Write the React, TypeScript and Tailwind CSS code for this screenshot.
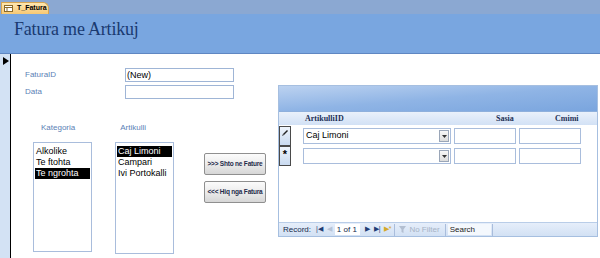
import React from "react";

const sans = { fontFamily: '"Liberation Sans", Arial, sans-serif' };

const ListBox = ({ items, selected, h }: { items: string[]; selected: number; h: string }) => {
  return (
    <div className={`w-[59px] ${h} border border-[#a9bddc] bg-white pt-[3px] px-[1px]`}>
      {items.map((it, i) => (
        <div
          key={it}
          className={`h-[11px] leading-[11px] text-[9px] pl-[1px] ${i === selected ? "bg-black text-white" : "text-black"}`}
        >
          {it}
        </div>
      ))}
    </div>
  );
};

const FormButton = ({ label }: { label: string }) => {
  return (
    <button className="w-[62px] h-[22px] border border-[#8f8f8f] rounded-[2px] bg-gradient-to-b from-[#fbfbfb] via-[#ececec] to-[#d6d6d6] text-[6.5px] font-bold text-[#1f2b4a] tracking-[-0.2px] whitespace-nowrap">
      {label}
    </button>
  );
};

const RecordSel = ({ children }: { children?: React.ReactNode }) => {
  return (
    <div className="w-[12px] h-[20px] border border-[#4a4a4a] bg-gradient-to-b from-[#eef4fb] to-[#c9daf0] flex justify-center text-[10px] leading-[12px] text-black">
      {children}
    </div>
  );
};

const ComboRow = ({ value, pencil }: { value: string; pencil?: boolean }) => {
  return (
    <div className="flex items-center h-[20px]">
      <RecordSel>
        {pencil ? (
          <svg width="8" height="9" viewBox="0 0 8 9" className="mt-[2px]">
            <path d="M6 1 L7 2 L3 6 L2 5 Z" fill="#222" />
            <path d="M2 5 L3 6 L1 7 Z" fill="#222" />
          </svg>
        ) : (
          <span className="text-[11px] leading-[14px] font-bold">*</span>
        )}
      </RecordSel>
      <div className="ml-[12px] w-[148px] h-[16px] border border-[#a9bddc] bg-white flex items-center">
        <span className="flex-1 text-[9px] pl-[2px]">{value}</span>
        <div className="w-[10px] h-[12px] mr-[1px] border border-[#9aa6b8] bg-gradient-to-b from-[#f7f7f7] to-[#dcdcdc] flex items-center justify-center">
          <svg width="5" height="3" viewBox="0 0 5 3">
            <path d="M0 0 H5 L2.5 3 Z" fill="#333" />
          </svg>
        </div>
      </div>
      <div className="ml-[3px] w-[62px] h-[16px] border border-[#a9bddc] bg-white" />
      <div className="ml-[3px] w-[62px] h-[16px] border border-[#a9bddc] bg-white" />
    </div>
  );
};

const NavBar = () => {
  return (
    <div className="h-[14px] mt-auto border-t border-[#b9cde8] bg-gradient-to-b from-[#e6eefa] to-[#d2e1f4] flex items-center text-[8px] text-[#15294b]">
      <span className="ml-[4px]">Record:</span>
      <span className="ml-[5px] text-[7px] text-[#1f3d75]">|◀</span>
      <span className="ml-[4px] text-[7px] text-[#b7c4d8]">◀</span>
      <div className="ml-[3px] w-[25px] h-[11px] bg-white flex items-center pl-[2px]">1 of 1</div>
      <span className="ml-[5px] text-[7px] text-[#1f3d75]">▶</span>
      <span className="ml-[4px] text-[7px] text-[#1f3d75]">▶|</span>
      <span className="ml-[3px] text-[7px] text-[#d4a92a]">▶*</span>
      <div className="ml-[3px] w-px h-[12px] bg-[#a9bddc]" />
      <span className="ml-[4px] text-[#a7b3c5] flex items-center">
        <svg width="8" height="8" viewBox="0 0 8 8" className="mr-[2px]">
          <path d="M0 0 H7 L4.5 3.5 V7 L2.5 6 V3.5 Z" fill="#b3bfd1" />
        </svg>
        No Filter
      </span>
      <div className="ml-[5px] w-px h-[12px] bg-[#a9bddc]" />
      <div className="ml-[2px] w-[43px] h-[11px] bg-[#f4f8fd] flex items-center pl-[2px] text-[#222]">Search</div>
      <div className="ml-[1px] w-px h-[12px] bg-[#a9bddc]" />
    </div>
  );
};

export default function App() {
  return (
    <div className="w-[600px] h-[258px] bg-white overflow-hidden flex flex-col" style={sans}>
      {/* tab strip */}
      <div className="h-[14px] bg-[#8ba8d2] flex items-end">
        <div className="ml-[1px] h-[12px] w-[48px] bg-gradient-to-b from-[#fde7b0] to-[#f7c873] border border-[#d7a550] border-b-0 rounded-tr-[6px] flex items-center">
          <svg width="9" height="7" viewBox="0 0 9 7" className="ml-[2px]">
            <rect x="0.5" y="0.5" width="8" height="6" fill="#fff" stroke="#8a6a2a" />
            <path d="M0.5 2.5 H8.5 M3 2.5 V6.5" stroke="#8a6a2a" />
          </svg>
          <span className="ml-[4px] text-[7px] font-bold text-black">T_Fatura</span>
        </div>
      </div>

      {/* form header */}
      <div className="h-[40px] bg-[#79a6e0] border-b border-[#5f87c2] flex items-start">
        <span
          className="ml-[14px] mt-[3px] text-[18px] leading-[24px] tracking-[-0.2px] text-[#1a3a70]"
          style={{ fontFamily: '"Liberation Serif", "Times New Roman", serif' }}
        >
          Fatura me Artikuj
        </span>
      </div>

      {/* detail */}
      <div className="flex-1 flex">
        <div className="w-[11px] bg-[#d3e2f4] border-r border-black">
          <svg width="6" height="8" viewBox="0 0 6 8" className="ml-[3px] mt-[3px]">
            <path d="M0 0 L6 4 L0 8 Z" fill="#000" />
          </svg>
        </div>

        {/* main fields column */}
        <div className="w-[266px] flex flex-col">
          <div className="mt-[14px] flex items-center h-[14px]">
            <span className="ml-[14px] w-[100px] text-[8px] text-[#5b7fb6]">FaturaID</span>
            <div className="w-[109px] h-[14px] border border-[#9fb5d6] text-[9px] leading-[12px] pl-[1px]">(New)</div>
          </div>
          <div className="mt-[3px] flex items-center h-[14px]">
            <span className="ml-[14px] w-[100px] text-[8px] text-[#5b7fb6]">Data</span>
            <div className="w-[109px] h-[14px] border border-[#9fb5d6]" />
          </div>

          <div className="mt-[23px] flex text-[8px] text-[#5b7fb6] h-[12px]">
            <span className="ml-[30px]">Kategoria</span>
            <span className="ml-[45px]">Artikulli</span>
          </div>

          <div className="mt-[8px] flex items-start">
            <div className="ml-[22px]">
              <ListBox items={["Alkolike", "Te ftohta", "Te ngrohta"]} selected={2} h="h-[110px]" />
            </div>
            <div className="ml-[23px]">
              <ListBox items={["Caj Limoni", "Campari", "Ivi Portokalli"]} selected={0} h="h-[112px]" />
            </div>
            <div className="ml-[30px] mt-[11px] flex flex-col gap-[6px]">
              <FormButton label=">>> Shto ne Fature" />
              <FormButton label="<<< Hiq nga Fatura" />
            </div>
          </div>
        </div>

        {/* subform */}
        <div className="mt-[31px] ml-[1px] w-[320px] h-[152px] border border-[#a6bfe0] flex flex-col">
          <div className="h-[25px] bg-gradient-to-br from-[#bcd2f0] via-[#8fb4e5] to-[#7aa5de]" />
          <div className="h-[14px] border-t border-[#8fb0dc] bg-gradient-to-b from-[#eaf1fb] to-[#d2e1f5] flex items-center text-[8px] font-bold text-[#1c2f55]" style={{ fontFamily: '"Liberation Serif", serif' }}>
            <span className="ml-[26px] w-[191px]">ArtikulliID</span>
            <span className="w-[59px]">Sasia</span>
            <span>Cmimi</span>
          </div>
          <div className="mt-[1px]">
            <ComboRow value="Caj Limoni" pencil />
            <ComboRow value="" />
          </div>
          <NavBar />
        </div>
      </div>
    </div>
  );
}
